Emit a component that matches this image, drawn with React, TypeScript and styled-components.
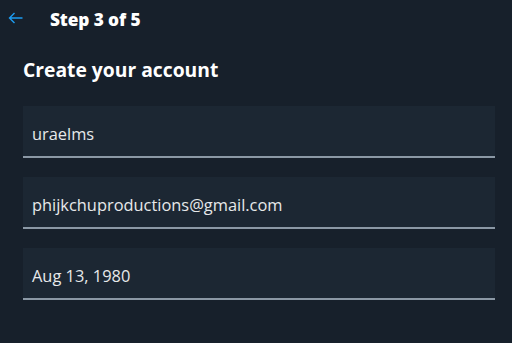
import React from "react";
import styled, { createGlobalStyle } from "styled-components";

const Global = createGlobalStyle`
  html, body { margin: 0; padding: 0; background: #17202b; }
  body { font-family: "Open Sans", "Noto Sans", sans-serif; color: #e7e9ea; }
  * { box-sizing: border-box; }
`;

const Page = styled.div`
  width: 512px;
  height: 343px;
  background: #17202b;
  display: flex;
  flex-direction: column;
  overflow: hidden;
`;

const TopBar = styled.div`
  height: 37px;
  display: flex;
  align-items: center;
  padding-left: 7px;
`;

const BackButton = styled.button`
  width: 16px;
  height: 16px;
  padding: 0;
  border: 0;
  background: none;
  color: #1d9bf0;
  display: flex;
  align-items: center;
  justify-content: center;
  margin-top: -1px;
`;

const StepLabel = styled.div`
  margin-left: 27px;
  margin-top: 2px;
  font-size: 17.3px;
  font-weight: 800;
  color: #ffffff;
  letter-spacing: -0.1px;
`;

const Title = styled.h1`
  margin: 20px 0 0 23px;
  font-size: 19.3px;
  font-weight: 700;
  line-height: 26px;
  color: #ffffff;
`;

const Fields = styled.div`
  display: flex;
  flex-direction: column;
  gap: 19px;
  margin: 23px 17px 0 23px;
`;

const Field = styled.div`
  height: 52px;
  background: #1c2733;
  border-bottom: 2px solid #8b98a5;
  display: flex;
  align-items: center;
  padding: 4px 9px 0;
  font-size: 16.4px;
  color: #e7e9ea;
`;

const Arrow = () => (
  <svg width="15" height="12" viewBox="0 0 15 12" fill="none" stroke="currentColor" strokeWidth="1.4">
    <path d="M14.5 6H1.5M6.5 1L1.5 6l5 5" />
  </svg>
);

export default function App() {
  return (
    <>
      <Global />
      <Page>
        <TopBar>
          <BackButton aria-label="Back"><Arrow /></BackButton>
          <StepLabel>Step 3 of 5</StepLabel>
        </TopBar>
        <Title>Create your account</Title>
        <Fields>
          <Field>uraelms</Field>
          <Field>phijkchuproductions@gmail.com</Field>
          <Field>Aug 13, 1980</Field>
        </Fields>
      </Page>
    </>
  );
}
